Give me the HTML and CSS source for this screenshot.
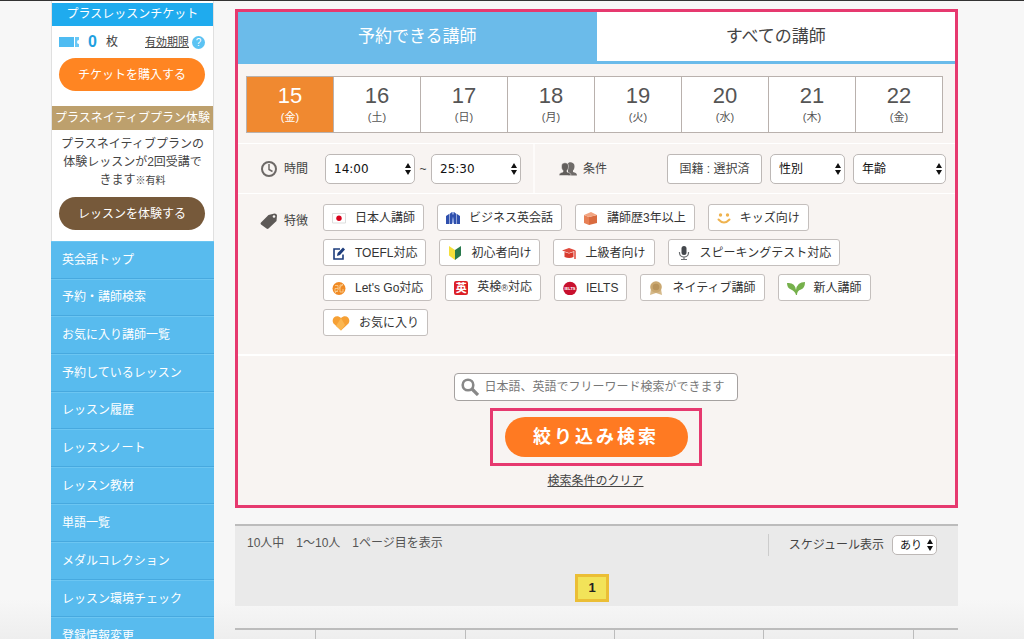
FILE: index.html
```html
<!DOCTYPE html>
<html lang="ja">
<head>
<meta charset="utf-8">
<title>講師検索</title>
<link rel="stylesheet" href="styles.css">
</head>
<body>
<svg class="defs" aria-hidden="true">
  <symbol id="arrows" viewBox="0 0 6 12"><path d="M3 0 6 5H0zM3 12 0 7h6z" fill="#111"/></symbol>
</svg>
<div class="page">
  <aside class="sidebar">
    <section class="plan">
      <h2 class="plan-title">プラスレッスンチケット</h2>
      <div class="ticket-row">
        <svg class="ticket" viewBox="0 0 20 12" aria-hidden="true"><path d="M0 1h15v10H0z" fill="#4fbcf2"/><path d="M16 1h4v3a2 2 0 0 0 0 4v3h-4z" fill="#6ac8f6"/></svg>
        <strong class="ticket-count">0</strong>
        <span>枚</span>
        <a class="expiry" href="#">有効期限</a>
        <span class="help">?</span>
      </div>
      <button class="pill pill-orange" type="button">チケットを購入する</button>
      <h2 class="plan-title plan-native">プラスネイティブプラン体験</h2>
      <p class="plan-text">プラスネイティブプランの体験レッスンが2回受講できます<small>※有料</small></p>
      <button class="pill pill-brown" type="button">レッスンを体験する</button>
    </section>
    <nav class="menu">
      <a href="#">英会話トップ</a>
      <a href="#">予約・講師検索</a>
      <a href="#">お気に入り講師一覧</a>
      <a href="#">予約しているレッスン</a>
      <a href="#">レッスン履歴</a>
      <a href="#">レッスンノート</a>
      <a href="#">レッスン教材</a>
      <a href="#">単語一覧</a>
      <a href="#">メダルコレクション</a>
      <a href="#">レッスン環境チェック</a>
      <a href="#">登録情報変更</a>
    </nav>
  </aside>

  <main class="main">
    <form class="panel">
      <div class="tabs">
        <button class="tab tab-active" type="button">予約できる講師</button>
        <button class="tab" type="button">すべての講師</button>
      </div>
      <div class="dates">
        <button class="date date-active" type="button">15<span>(金)</span></button>
        <button class="date" type="button">16<span>(土)</span></button>
        <button class="date" type="button">17<span>(日)</span></button>
        <button class="date" type="button">18<span>(月)</span></button>
        <button class="date" type="button">19<span>(火)</span></button>
        <button class="date" type="button">20<span>(水)</span></button>
        <button class="date" type="button">21<span>(木)</span></button>
        <button class="date" type="button">22<span>(金)</span></button>
      </div>

      <div class="filters">
        <div class="filter filter-time">
          <label class="filter-label" for="from">
            <svg viewBox="0 0 18 18" aria-hidden="true"><circle cx="9" cy="9" r="7" fill="none" stroke="#6d6967" stroke-width="2"/><path d="M9 4v5.500l3.500 2" fill="none" stroke="#6d6967" stroke-width="1.500"/></svg>
            時間</label>
          <span class="select select-time"><select id="from"><option>14:00</option></select><svg><use href="#arrows"/></svg></span>
          <span class="tilde">~</span>
          <span class="select select-time"><select aria-label="終了時間"><option>25:30</option></select><svg><use href="#arrows"/></svg></span>
        </div>
        <div class="filter filter-terms">
          <span class="filter-label">
            <svg viewBox="0 0 18 18" aria-hidden="true"><path d="M9 3.500C10 1.500 15.500 2 15.500 6c0 2-.5 3.500-1.500 4.500v1.500c2 .5 4 1.200 4 3.500H9z" fill="#6f6b69"/><path d="M0 15.500c0-2.300 2-3 4-3.500v-1.500C2.800 9.500 2.500 8 2.500 6c0-4.300 7-4.300 7 0 0 2-.5 3.500-1.500 4.500V12c2 .5 4 1.200 4 3.500z" fill="#625e5c" stroke="#f8f4f2" stroke-width=".5"/></svg>
            条件</span>
          <button class="nation" type="button">国籍 : 選択済</button>
          <span class="select select-sex"><select aria-label="性別"><option>性別</option></select><svg><use href="#arrows"/></svg></span>
          <span class="select select-age"><select aria-label="年齢"><option>年齢</option></select><svg><use href="#arrows"/></svg></span>
        </div>
      </div>

      <div class="features">
        <span class="filter-label">
          <svg viewBox="0 0 18 18" aria-hidden="true"><path d="M1 10.500 8.500 3 14.500 1.500q2.300 0 2.500 2L16.500 9l-8 7.500q-1 .8-2 0l-5.500-4q-1-1 0-2z" fill="#5d5957"/><circle cx="14" cy="4.500" r="1.300" fill="#f8f4f2"/></svg>
          特徴</span>
        <div class="chips">
          <button class="chip" type="button"><svg viewBox="0 0 14 14"><path d="M.5 2.500h13v9.500H.5z" fill="#fff" stroke="#ddd"/><circle cx="7" cy="7.200" r="2.700" fill="#d9001b"/></svg>日本人講師</button>
          <button class="chip" type="button"><svg viewBox="0 0 14 14"><path d="M0 5l3-2v10H0zM14 5l-3-2v10h3zM3.500 3 6 1l1 3 1-3 2.500 2v10H8L7 6l-1 7H3.500z" fill="#2f50ad"/><path d="M6 1h2L7 4zM7 5l.8 6L7 13l-.8-2z" fill="#7f98df"/></svg>ビジネス英会話</button>
          <button class="chip" type="button"><svg viewBox="0 0 14 14"><path d="M0 4l5 2v8l-5-2z" fill="#e78055"/><path d="M5 6l8-2v8l-8 2z" fill="#d96b3f"/><path d="M0 4l7-3 6 3-8 2z" fill="#f2a480"/></svg>講師歴3年以上</button>
          <button class="chip" type="button"><svg viewBox="0 0 14 14"><circle cx="3.500" cy="4" r="1.700" fill="#efb34f"/><circle cx="10.500" cy="4" r="1.700" fill="#efb34f"/><path d="M1.500 8.500q5.500 6 11 0" fill="none" stroke="#efb34f" stroke-width="2" stroke-linecap="round"/></svg>キッズ向け</button>
          <button class="chip" type="button"><svg viewBox="0 0 14 14"><path d="M8 3H2v10h9V8.500" fill="none" stroke="#1d3d7c" stroke-width="1.600"/><path d="M5 10l.6-3L11 1.500l2 2L8 9z" fill="#1d3d7c"/></svg>TOEFL対応</button>
          <button class="chip" type="button"><svg viewBox="0 0 14 14"><path d="M1 0l6 4v10l-6-4.500z" fill="#f4df3b"/><path d="M13 0 7 4v10l6-4.500z" fill="#28794c"/></svg>初心者向け</button>
          <button class="chip" type="button"><svg viewBox="0 0 14 14"><path d="M0 4.500 7 2l7 2.500L7 7z" fill="#e04a3d"/><path d="M2.500 6 7 7.500 11.500 6v5q-4 2-9 0z" fill="#d83a2e"/><path d="M13 5v8" stroke="#e04a3d" stroke-width="1.500"/></svg>上級者向け</button>
          <button class="chip" type="button"><svg viewBox="0 0 14 14"><rect x="4.500" y="0" width="5" height="9" rx="2.500" fill="#44484d"/><path d="M2.500 6v1a4.500 4 0 0 0 9 0V6M7 11v2.500M4 13.500h6" fill="none" stroke="#6a6d70" stroke-width="1.200"/></svg>スピーキングテスト対応</button>
          <button class="chip" type="button"><svg viewBox="0 0 14 14"><circle cx="7" cy="7.500" r="6.500" fill="#f08a24"/><path d="M3 4.500h3v3H3v3h3M11 4H8v7h3V8M3 12l8-9" fill="none" stroke="#fbd49c" stroke-width=".8"/></svg>Let's Go対応</button>
          <button class="chip" type="button"><span class="eiken">英</span><span>英検<small>®</small>対応</span></button>
          <button class="chip" type="button"><svg viewBox="0 0 14 14"><circle cx="7" cy="7.500" r="6.800" fill="#c8102e"/><text class="badge-text" x="7" y="9">IELTS</text></svg>IELTS</button>
          <button class="chip" type="button"><svg viewBox="0 0 14 14"><path d="M2 8h10l1 6-3-1-3-1-3 1-3 1z" fill="#d5b98a"/><circle cx="7" cy="6" r="5.800" fill="#caa871"/><circle cx="7" cy="6" r="3.300" fill="#b8935b"/></svg>ネイティブ講師</button>
          <button class="chip chip-wide" type="button"><svg viewBox="0 0 18 14"><path d="M9 14Q8 10 4 8.500 0 7 0 2q8-1 9 7 1-8 9-8 0 6-4 7.500-4 1-4 5.500z" fill="#75b04b"/></svg>新人講師</button>
          <button class="chip chip-wide" type="button"><svg viewBox="0 0 18 16"><path d="M9 15.500 1.500 8.500C-1.500 4 4-1.500 9 3c5-4.500 10.500 1 7.500 5.500z" fill="#f6a034"/><path d="M9 15.500 4 11l5-8 4 7z" fill="#fbb650"/></svg>お気に入り</button>
        </div>
      </div>

      <div class="search">
        <div class="keyword">
          <svg viewBox="0 0 18 18" aria-hidden="true"><circle cx="7" cy="7" r="5.300" fill="none" stroke="#888" stroke-width="2.600"/><path d="m11 11 6 6" stroke="#888" stroke-width="3.200"/></svg>
          <input type="text" aria-label="フリーワード" placeholder="日本語、英語でフリーワード検索ができます">
        </div>
        <div class="submit-frame"><button class="submit" type="submit">絞り込み検索</button></div>
        <a class="clear" href="#">検索条件のクリア</a>
      </div>
    </form>

    <section class="results">
      <div class="results-head">
        <p class="count">10人中　1〜10人　1ページ目を表示</p>
        <div class="schedule">
          <label for="schedule">スケジュール表示</label>
          <span class="select select-small"><select id="schedule"><option>あり</option></select><svg><use href="#arrows"/></svg></span>
        </div>
      </div>
      <a class="page-number" href="#">1</a>
    </section>

    <div class="timetable">
      <div></div><div></div><div></div><div></div><div></div><div></div>
    </div>
  </main>
</div>
</body>
</html>
```

FILE: styles.css
```css
* { box-sizing: border-box; }

body {
  margin: 0;
  background: #f7f7f7;
  color: #444;
  font: 12px/18px "Liberation Sans", "Noto Sans CJK JP", sans-serif;
}

button, input, select { font: inherit; color: inherit; margin: 0; }
button { cursor: pointer; padding: 0; white-space: nowrap; }
h2, p { margin: 0; font-weight: normal; }
.defs { display: none; }

.page {
  display: flex;
  gap: 21px;
  height: 100vh;
  overflow: hidden;
  padding: 0 66px 0 51px;
  border-top: 1px solid #333;
  background: linear-gradient(to top, #eee, #f7f7f7 40px);
}

/* Sidebar */
.sidebar { flex: 0 0 163px; }

.plan {
  display: flex;
  flex-direction: column;
  padding: 2px 0 11px;
  background: #fff;
  border: solid #e0e0e0;
  border-width: 0 1px;
}

.plan-title {
  background: #1fabee;
  color: #fff;
  font-size: 12px;
  line-height: 23px;
  text-align: center;
  white-space: nowrap;
}

.plan-native { margin-top: 15px; background: #bda06d; line-height: 24px; }

.ticket-row {
  display: flex;
  align-items: center;
  height: 32px;
  padding: 0 8px 0 7px;
}
.ticket { width: 20px; height: 12px; }
.ticket-count { margin: 0 9px 0 9px; color: #1fa0e0; font-size: 16px; }
.expiry { margin-left: auto; color: inherit; font-size: 11px; }
.help {
  width: 13px;
  margin-left: 3px;
  border-radius: 50%;
  background: #5bc3f3;
  color: #fff;
  font-size: 10px;
  line-height: 13px;
  text-align: center;
}

.pill {
  height: 33px;
  margin: 0 8px 0 7px;
  border: 0;
  border-radius: 17px;
  color: #fff;
}
.pill-orange { background: #ff8522; }
.pill-brown { background: #76593a; }

.plan-text { padding: 5px 8px 7px; text-align: center; }
.plan-text small { font-size: 10px; }

.menu {
  display: grid;
  grid-auto-rows: 1fr;
  height: 414px;
  background: #58bbee;
}
.menu a {
  display: flex;
  align-items: center;
  padding-left: 11px;
  border-top: 1px solid #6cc6f2;
  border-bottom: 1px solid #47a9df;
  color: #fff;
  text-decoration: none;
}

/* Search panel */
.main { flex: 1; min-width: 0; padding-top: 8px; }

.panel {
  border: 3px solid #e6396f;
  background: #f8f4f2;
}

.tabs { display: flex; }
.tab {
  flex: 1;
  height: 52px;
  border: 0;
  border-bottom: 3px solid #6bbbea;
  background: #fff;
  font-size: 17px;
}
.tab-active { background: #6bbbea; color: #fff; }

.dates {
  display: flex;
  margin: 12px 12px 10px 8px;
  border: 1px solid #b9b1ad;
  background: #fff;
}
.date {
  flex: 1;
  height: 55px;
  border: 0;
  border-left: 1px solid #b9b1ad;
  background: none;
  color: #555;
  font-size: 22px;
  line-height: 24px;
}
.date span { display: block; font-size: 11px; line-height: 18px; }
.date-active { border-left: 0; background: #f08930; color: #fff; }

.filters {
  display: flex;
  border: solid #fff;
  border-width: 1px 0;
}
.filter {
  display: flex;
  align-items: center;
  height: 49px;
}
.filter-time { flex: 0 0 297px; padding-left: 22px; border-right: 2px solid #fdfbfa; }
.filter-terms { flex: 1; padding: 0 9px 0 24px; gap: 8px; }
.filter-terms .filter-label { margin-right: auto; }

.filter-label {
  display: flex;
  align-items: center;
  flex: 0 0 65px;
  gap: 6px;
}
.filter-label svg { width: 18px; height: 18px; }

.select { position: relative; display: flex; color: #111; }
.select select {
  width: 100%;
  height: 30px;
  padding: 0 8px;
  border: 1px solid #bdb8b6;
  border-radius: 5px;
  background: #fff;
  appearance: none;
}
.select svg {
  position: absolute;
  top: 50%;
  right: 4px;
  width: 6px;
  height: 12px;
  transform: translateY(-50%);
  pointer-events: none;
}
.select-time { width: 90px; font-family: "DejaVu Sans", sans-serif; }
.select-sex { width: 75px; }
.select-age { width: 93px; }
.tilde { width: 16px; text-align: center; }

.nation {
  width: 95px;
  height: 30px;
  border: 1px solid #bdb8b6;
  border-radius: 3px;
  background: #fff;
}

.features {
  display: flex;
  align-items: flex-start;
  padding: 10px 48px 18px 22px;
  border-bottom: 2px solid #fff;
}
.features .filter-label { flex-basis: 63px; padding-top: 8px; }

.chips { display: flex; flex-wrap: wrap; gap: 8px 13px; }
.chip {
  display: flex;
  align-items: center;
  gap: 9px;
  height: 27px;
  padding: 0 8px;
  border: 1px solid #c4bfbd;
  border-radius: 3px;
  background: #fff;
  color: #333;
}
.chip svg { width: 14px; height: 14px; }
.chip small { font-size: 9px; }
.chip-wide svg { width: 18px; height: 16px; }
.badge-text { fill: #fff; font-size: 4px; font-weight: bold; text-anchor: middle; }
.eiken {
  width: 14px;
  border-radius: 2px;
  background: #dc1f26;
  color: #fff;
  font-size: 11px;
  font-weight: bold;
  line-height: 14px;
  text-align: center;
}

.search {
  display: flex;
  flex-direction: column;
  align-items: center;
  padding: 17px 2px 15px 0;
}
.keyword {
  display: flex;
  align-items: center;
  gap: 6px;
  width: 284px;
  height: 28px;
  padding: 0 6px;
  border: 1px solid #a5a1a0;
  border-radius: 4px;
  background: #fff;
}
.keyword svg { flex: none; width: 18px; height: 18px; }
.keyword input {
  flex: 1;
  min-width: 0;
  padding: 0;
  border: 0;
  outline: 0;
  background: none;
}
.keyword input::placeholder { color: #777; }

.submit-frame {
  margin: 7px 0 6px;
  padding: 6px 11px 6px 12px;
  border: 3px solid #e6396f;
}
.submit {
  width: 183px;
  height: 40px;
  border: 0;
  border-radius: 20px;
  background: #ff7a22;
  color: #fff;
  font-size: 18px;
  font-weight: bold;
  letter-spacing: 3px;
}
.clear { color: inherit; }

/* Results */
.results {
  display: flex;
  flex-direction: column;
  margin-top: 16px;
  padding: 8px 21px 4px 12px;
  border-top: 2px solid #bcbcbc;
  background: #eaeaea;
}
.results-head { display: flex; justify-content: space-between; align-items: flex-start; }
.count { color: #555; }
.schedule {
  display: flex;
  align-items: center;
  gap: 8px;
  height: 22px;
  padding-left: 20px;
  border-left: 1px solid #ccc;
}
.select-small { width: 45px; }
.select-small select { height: 20px; font-size: 11px; padding: 0 7px; }

.page-number {
  align-self: center;
  width: 34px;
  margin: 18px 0 0;
  border: 3px solid #ebbe35;
  background: #f2e359;
  color: #222;
  font-size: 13px;
  font-weight: bold;
  line-height: 22px;
  text-align: center;
  text-decoration: none;
}

.timetable {
  display: grid;
  grid-template-columns: 80fr 150fr 150fr 149fr 150fr 45fr;
  height: 40px;
  margin-top: 22px;
  border-top: 2px solid #bcbcbc;
}
.timetable div + div { border-left: 1px solid #bcbcbc; }
```
